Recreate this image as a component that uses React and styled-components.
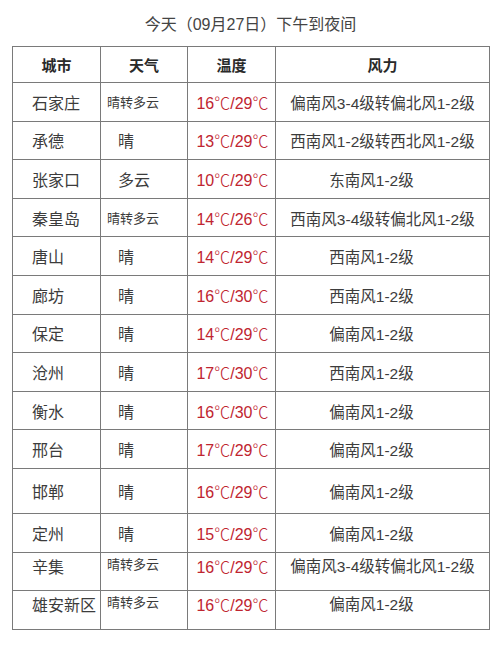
import React from 'react';
import styled, { createGlobalStyle } from 'styled-components';

const GlobalStyle = createGlobalStyle`
  html, body {
    margin: 0;
    padding: 0;
    background: #ffffff;
  }
  body {
    font-family: "Liberation Sans", "Noto Sans CJK SC", sans-serif;
    color: #3c3c3c;
  }
`;

const Page = styled.div`
  width: 500px;
  height: 646px;
  padding: 14px 11px 0 12px;
  box-sizing: border-box;
`;

const Title = styled.h2`
  margin: 0 0 10px;
  height: 22px;
  line-height: 22px;
  text-align: center;
  font-size: 16px;
  font-weight: 400;
  color: #444;
`;

const Table = styled.table`
  width: 477px;
  border-collapse: collapse;
  table-layout: fixed;
`;

const HeadCell = styled.th`
  height: 35px;
  padding: 0;
  border: 1px solid #7a7a7a;
  font-family: "Noto Sans CJK SC", sans-serif;
  font-size: 15px;
  font-weight: 700;
  color: #2a2a2a;
  text-align: center;
`;

const Row = styled.tr`
  height: ${p => (p.$tall ? '45px' : '38.6px')};
`;

const Cell = styled.td`
  padding: ${p => (p.$top ? '1px 0 0' : '0')};
  border: 1px solid #7a7a7a;
  font-size: 16px;
  vertical-align: ${p => (p.$top ? 'top' : 'middle')};
  white-space: nowrap;
  overflow: hidden;
`;

const CityCell = styled(Cell)`
  padding-left: 19px;
  text-align: left;
`;

const WeatherCell = styled(Cell)`
  padding-left: ${p => (p.$small ? '6px' : '17px')};
  font-size: ${p => (p.$small ? '13px' : '16px')};
  text-align: left;
`;

const TempCell = styled(Cell)`
  text-align: center;
  color: #bf2530;
  padding-left: 2px;
`;

const Degree = styled.span`
  font-family: "Noto Sans CJK SC", sans-serif;
  font-weight: 300;
`;

const WindCell = styled(Cell)`
  text-align: center;
  font-size: 15.5px;
  padding-right: ${p => (p.$short ? '22px' : '0')};
`;

const rows = [
  ['石家庄', '晴转多云', [16, 29], '偏南风3-4级转偏北风1-2级'],
  ['承德', '晴', [13, 29], '西南风1-2级转西北风1-2级'],
  ['张家口', '多云', [10, 29], '东南风1-2级'],
  ['秦皇岛', '晴转多云', [14, 26], '西南风3-4级转偏北风1-2级'],
  ['唐山', '晴', [14, 29], '西南风1-2级'],
  ['廊坊', '晴', [16, 30], '西南风1-2级'],
  ['保定', '晴', [14, 29], '偏南风1-2级'],
  ['沧州', '晴', [17, 30], '西南风1-2级'],
  ['衡水', '晴', [16, 30], '偏南风1-2级'],
  ['邢台', '晴', [17, 29], '偏南风1-2级'],
  ['邯郸', '晴', [16, 29], '偏南风1-2级', 'tall'],
  ['定州', '晴', [15, 29], '偏南风1-2级'],
  ['辛集', '晴转多云', [16, 29], '偏南风3-4级转偏北风1-2级', 'top'],
  ['雄安新区', '晴转多云', [16, 29], '偏南风1-2级', 'top'],
];

export default function App() {
  return (
    <Page>
      <GlobalStyle />
      <Title>今天（09月27日）下午到夜间</Title>
      <Table>
        <colgroup>
          <col style={{ width: 88 }} />
          <col style={{ width: 87 }} />
          <col style={{ width: 88 }} />
          <col style={{ width: 214 }} />
        </colgroup>
        <thead>
          <tr>
            <HeadCell>城市</HeadCell>
            <HeadCell>天气</HeadCell>
            <HeadCell>温度</HeadCell>
            <HeadCell>风力</HeadCell>
          </tr>
        </thead>
        <tbody>
          {rows.map(([city, weather, [low, high], wind, flag]) => {
            const top = flag === 'top';
            return (
              <Row key={city} $tall={flag === 'tall'}>
                <CityCell $top={top}>{city}</CityCell>
                <WeatherCell $top={top} $small={weather.length > 2}>{weather}</WeatherCell>
                <TempCell $top={top}>
                  {low}<Degree>℃</Degree>/{high}<Degree>℃</Degree>
                </TempCell>
                <WindCell $top={top} $short={wind.length < 10}>{wind}</WindCell>
              </Row>
            );
          })}
        </tbody>
      </Table>
    </Page>
  );
}
